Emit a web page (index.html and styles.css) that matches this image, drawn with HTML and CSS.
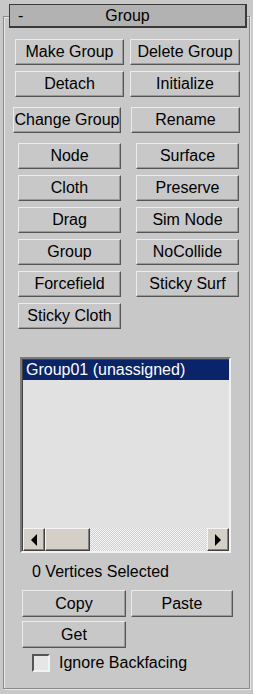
FILE: index.html
```html
<!DOCTYPE html>
<html lang="en">
<head>
  <meta charset="UTF-8" />
  <meta name="viewport" content="width=device-width, initial-scale=1" />
  <title>Group Rollout</title>
  <link rel="stylesheet" href="styles.css">
</head>
<body>
  <div class="rollout">
    <div class="rollout-title">
      <span class="toggle">-</span>
      <span class="title">Group</span>
      <span></span>
    </div>

    <div class="row row-a first">
      <button class="btn w-make">Make Group</button>
      <button class="btn w-delete">Delete Group</button>
    </div>
    <div class="row row-a">
      <button class="btn w-make">Detach</button>
      <button class="btn w-delete">Initialize</button>
    </div>
    <div class="row row-c">
      <button class="btn w-change">Change Group</button>
      <button class="btn w-rename">Rename</button>
    </div>

    <div class="types">
      <div class="row row-b">
        <button class="btn w-type">Node</button>
        <button class="btn w-type">Surface</button>
      </div>
      <div class="row row-b">
        <button class="btn w-type">Cloth</button>
        <button class="btn w-type">Preserve</button>
      </div>
      <div class="row row-b">
        <button class="btn w-type">Drag</button>
        <button class="btn w-type">Sim Node</button>
      </div>
      <div class="row row-b">
        <button class="btn w-type">Group</button>
        <button class="btn w-type">NoCollide</button>
      </div>
      <div class="row row-b">
        <button class="btn w-type">Forcefield</button>
        <button class="btn w-type">Sticky Surf</button>
      </div>
      <div class="row row-b">
        <button class="btn w-type">Sticky Cloth</button>
      </div>
    </div>

    <div class="listbox">
      <div class="list-items">
        <div class="list-item selected">Group01 (unassigned)</div>
      </div>
      <div class="hscroll">
        <div class="sb-btn"><span class="arrow-left"></span></div>
        <div class="sb-thumb"></div>
        <div class="sb-track"></div>
        <div class="sb-btn"><span class="arrow-right"></span></div>
      </div>
    </div>

    <div class="status">0 Vertices Selected</div>

    <div class="row row-d">
      <button class="btn w-copy">Copy</button>
      <button class="btn w-paste">Paste</button>
    </div>
    <div class="row row-d tight">
      <button class="btn w-copy">Get</button>
    </div>

    <label class="check">
      <span class="box"></span>
      <span>Ignore Backfacing</span>
    </label>
  </div>
</body>
</html>
```

FILE: styles.css
```css
body {
  margin: 0;
  width: 253px;
  height: 694px;
  background-color: #c8c8c8;
  font-family: "Liberation Sans", Arial, sans-serif;
  font-size: 16px;
  color: #000;
  overflow: hidden;
}
.rollout {
  margin: 16px 0 0 3px;
  width: 247px;
  height: 673px;
  box-sizing: border-box;
  border: 1px solid #8a8a8a;
  box-shadow: inset 1px 1px 0 #e8e8e8, 1px 1px 0 #e8e8e8;
}
.rollout-title {
  margin: -13px 2px 0 5px;
  height: 24px;
  box-sizing: border-box;
  background-color: #b2b2b2;
  border: 1px solid #3a3a3a;
  border-right-width: 2px;
  border-bottom-width: 2px;
  display: grid;
  grid-template-columns: 1fr auto 1fr;
  align-items: center;
  line-height: 20px;
}
.toggle {
  padding-left: 8px;
}

.row {
  display: flex;
  height: 26px;
  margin-top: 6px;
}
.row.first { margin-top: 11px; }
.row-a { padding-left: 11px; gap: 6px; }
.row-c { margin-top: 10px; padding-left: 9px; gap: 10px; }
.types { margin-top: 10px; }
.types .row:first-child { margin-top: 0; }
.row-b { padding-left: 14px; gap: 15px; }
.row-d { height: 27px; margin-top: 8px; padding-left: 18px; gap: 5px; }
.row-d.tight { margin-top: 4px; }

.btn {
  height: 100%;
  padding: 0;
  background-color: #c8c8c8;
  border: 1px solid;
  border-color: #ececec #555 #555 #ececec;
  box-shadow: inset -1px -1px 0 #9a9a9a;
  font-family: inherit;
  font-size: 16px;
  color: #000;
  white-space: nowrap;
  cursor: pointer;
}
.w-make { width: 109px; }
.w-delete { width: 110px; }
.w-change { width: 108px; }
.w-rename { width: 109px; }
.w-type { width: 103px; }
.w-copy { width: 104px; }
.w-paste { width: 102px; }

.listbox {
  margin: 28px 0 0 16px;
  width: 211px;
  height: 196px;
  box-sizing: border-box;
  border: 2px solid;
  border-color: #7a7a7a #f2f2f2 #f2f2f2 #7a7a7a;
  background-color: #e1e1e1;
  display: flex;
  flex-direction: column;
}
.list-items {
  flex: 1;
  border-top: 1px solid #404040;
  border-left: 1px solid #404040;
}
.list-item {
  height: 20px;
  line-height: 20px;
  padding-left: 3px;
  white-space: nowrap;
}
.list-item.selected {
  background-color: #0a246a;
  color: #fff;
}

.hscroll {
  display: flex;
  height: 23px;
  border-left: 1px solid #404040;
}
.sb-btn {
  width: 22px;
  box-sizing: border-box;
  background-color: #d4d0c8;
  border: 1px solid;
  border-color: #f4f4f4 #404040 #404040 #f4f4f4;
  box-shadow: inset -1px -1px 0 #808080;
  display: flex;
  align-items: center;
  justify-content: center;
}
.sb-thumb {
  width: 45px;
  box-sizing: border-box;
  background-color: #d4d0c8;
  border: 1px solid;
  border-color: #f4f4f4 #404040 #404040 #f4f4f4;
  box-shadow: inset -1px -1px 0 #808080;
}
.sb-track {
  flex: 1;
  background-color: #f4f4f4;
  background-image: repeating-conic-gradient(#d4d0c8 0 25%, #f4f4f4 0 50%);
  background-size: 2px 2px;
}
.arrow-left {
  width: 0;
  height: 0;
  border-top: 6px solid transparent;
  border-bottom: 6px solid transparent;
  border-right: 6px solid #000;
}
.arrow-right {
  width: 0;
  height: 0;
  border-top: 6px solid transparent;
  border-bottom: 6px solid transparent;
  border-left: 6px solid #000;
}

.status {
  margin: 9px 0 0 28px;
  height: 20px;
  line-height: 20px;
}

.check {
  display: flex;
  align-items: center;
  gap: 9px;
  margin: 6px 0 0 28px;
  height: 18px;
}
.box {
  width: 18px;
  height: 18px;
  box-sizing: border-box;
  background-color: #e6e6e6;
  border: 2px solid;
  border-color: #555 #f2f2f2 #f2f2f2 #555;
}
```
